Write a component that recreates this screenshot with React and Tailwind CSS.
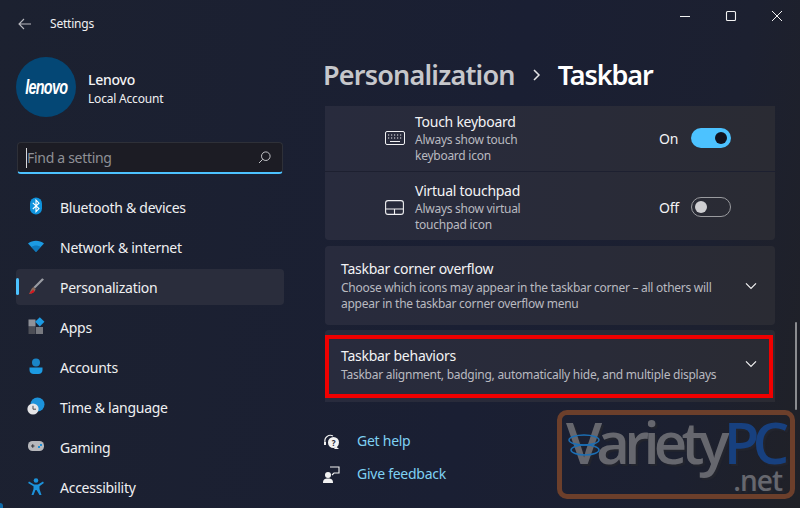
import React from "react";

const Bluetooth = () => (
  <svg width="20" height="20" viewBox="0 0 20 20">
    <rect x="4" y="0.5" width="12" height="17" rx="6" fill="#0f93dc" />
    <path d="M6.800 5.800 13 11.600 10 14.600V3.200l3 3L6.800 12" fill="none" stroke="#fff" strokeWidth="1.100" />
  </svg>
);
const Wifi = () => (
  <svg width="20" height="20" viewBox="0 0 20 20">
    <path d="M2 6.500C6.500 2.800 13.500 2.800 18 6.500L10 15Z" fill="#1c9ae2" />
    <path d="M5.500 10C8 8 12 8 14.500 10L10 15Z" fill="#0d78bd" />
  </svg>
);
const Brush = () => (
  <svg width="20" height="20" viewBox="0 0 20 20">
    <path d="M18 2.500 9 11.500 7.500 10 16.200 1.200Z" fill="#9a9ca3" />
    <path d="M7.500 10 9.600 12.200C9 15 6.500 16.500 2.800 16.800 4.800 15 4.500 11.600 7.500 10Z" fill="#8a6a5c" />
    <path d="M3 16.800 7 12.800 8.600 14.200C7.200 16 5.500 16.600 3 16.800Z" fill="#d8141c" />
  </svg>
);
const Apps = () => (
  <svg width="20" height="20" viewBox="0 0 20 20">
    <rect x="2.500" y="2.500" width="7" height="7" fill="#8f9198" />
    <rect x="2.500" y="10" width="7" height="7" fill="#4c4e56" />
    <rect x="10" y="10" width="7" height="7" fill="#77797f" />
    <rect x="10.500" y="1.500" width="6.600" height="6.600" transform="rotate(45 13.800 4.800)" fill="#1c9ae2" />
  </svg>
);
const Accounts = () => (
  <svg width="20" height="20" viewBox="0 0 20 20">
    <circle cx="10" cy="5.500" r="4" fill="#1a85c8" />
    <path d="M3.500 10.500h13v2.500c0 2.500-2 4-4 4h-5c-2 0-4-1.500-4-4Z" fill="#1c9ae2" />
  </svg>
);
const Clock = () => (
  <svg width="20" height="20" viewBox="0 0 20 20">
    <circle cx="11.500" cy="7.500" r="7" fill="#1c92da" />
    <circle cx="7" cy="12" r="5.600" fill="#e4e4e6" />
    <path d="M7 8.800V12.200H10" fill="none" stroke="#4a4a4e" strokeWidth="1" />
  </svg>
);
const Gaming = () => (
  <svg width="20" height="20" viewBox="0 0 20 20">
    <rect x="2" y="4" width="16" height="10" rx="4.500" fill="#b6b7bb" />
    <path d="M5 9h3.500M6.750 7.250v3.500" stroke="#33353c" strokeWidth="1.100" />
    <rect x="12" y="9" width="2" height="2" fill="#1c8fd8" />
    <rect x="14" y="7" width="2" height="2" fill="#1c8fd8" />
  </svg>
);
const Accessibility = () => (
  <svg width="20" height="20" viewBox="0 0 20 20">
    <circle cx="10" cy="3.500" r="2.300" fill="#1c92da" />
    <path d="M3 4.500 8 7.500h4l5-3 .9 1.400-4.400 3.300V12l2 6h-2L10.500 13h-1L7.500 18h-2l2-6V9.200L2.100 5.900Z" fill="#1c92da" />
  </svg>
);

const Chevron = () => (
  <svg width="12" height="8" viewBox="0 0 12 8" fill="none" stroke="#f2f2f2" strokeWidth="1.200">
    <path d="M1 1.300 6 6.300 11 1.300" />
  </svg>
);

const navItems = [
  ["Bluetooth & devices", Bluetooth],
  ["Network & internet", Wifi],
  ["Personalization", Brush],
  ["Apps", Apps],
  ["Accounts", Accounts],
  ["Time & language", Clock],
  ["Gaming", Gaming],
  ["Accessibility", Accessibility],
];

function NavRow({ label, Icon, active }) {
  return (
    <div className="h-10 py-0.5">
      <div className={"relative flex h-9 items-center rounded pl-[10px] " + (active ? "bg-[#2a2d3c]" : "")}>
        {active && <span className="absolute left-0 top-[9px] h-[17px] w-[3px] rounded-full bg-[#4cc2ff]" />}
        <span className="flex w-[34px] shrink-0"><Icon /></span>
        <span className="text-[14px] tracking-[-0.26px] text-[#eff0f2]">{label}</span>
      </div>
    </div>
  );
}

function Toggle({ on }) {
  return on ? (
    <span className="flex h-5 w-10 items-center justify-end rounded-full bg-[#4cc2ff] pr-1">
      <span className="h-3 w-3 rounded-full bg-[#10131f]" />
    </span>
  ) : (
    <span className="flex h-5 w-10 items-center rounded-full border border-[#9a9b9f] pl-[3px]">
      <span className="h-3 w-3 rounded-full bg-[#cfcfd2]" />
    </span>
  );
}

function ToggleRow({ title, l1, l2, on, icon, h }) {
  return (
    <div className={"flex items-center pl-[60px] pr-[44px] " + h}>
      <span className="flex w-[30px] shrink-0">{icon}</span>
      <div className="flex-1">
        <div className="text-[14px] leading-[20px] tracking-[-0.26px] text-[#f3f3f5]">{title}</div>
        <div className="text-[12px] leading-[16px] tracking-[-0.26px] text-[#b9bac0]">{l1}</div>
        <div className="text-[12px] leading-[16px] tracking-[-0.26px] text-[#b9bac0]">{l2}</div>
      </div>
      <span className="w-[32px] text-[14px] tracking-[-0.26px] text-[#f3f3f5]">{on ? "On" : "Off"}</span>
      <Toggle on={on} />
    </div>
  );
}

export default function App() {
  return (
    <div
      className="relative flex h-[508px] w-[800px] overflow-hidden bg-[linear-gradient(100deg,#1c2130_0%,#1a1f33_60%,#1c2030_85%,#202127_100%)] text-white"
      style={{ fontFamily: '"Noto Sans", "Open Sans", sans-serif' }}
    >
      <aside className="w-[300px] shrink-0 pl-4 pr-4">
        <div className="flex h-12 items-center">
          <svg width="13" height="12" viewBox="0 0 13 12" fill="none" stroke="#b9bac0" strokeWidth="1.100" className="ml-[2px]">
            <path d="M13 6H1M6 1 1 6l5 5" />
          </svg>
          <span className="ml-[19px] text-[12px] tracking-[-0.2px] text-[#f0f0f2]">Settings</span>
        </div>
        <div className="mt-[9px] flex items-center">
          <div className="flex h-[60px] w-[60px] items-center justify-center rounded-full bg-[#044775]">
            <span className="scale-x-[0.72] text-[20px] font-bold italic tracking-[-1px] text-white" style={{ fontFamily: '"Liberation Sans", sans-serif' }}>lenovo</span>
          </div>
          <div className="ml-3 mt-[3px]">
            <div className="text-[14px] font-medium leading-[20px] tracking-[-0.26px] text-[#f3f3f5]">Lenovo</div>
            <div className="mt-[1px] text-[12px] leading-[16px] tracking-[-0.2px] text-[#f0f0f2]">Local Account</div>
          </div>
        </div>
        <div className="relative ml-px mt-[25px] flex h-[32px] w-[266px] items-center rounded border border-[#2e3038] border-b-2 border-b-[#4cc2ff] bg-[#1c1c24] pl-[8px] pr-[11px]">
          <span className="h-[20px] w-px bg-[#d8d8da]" />
          <span className="flex-1 text-[14px] tracking-[-0.3px] text-[#8f9096]">Find a setting</span>
          <svg width="13" height="13" viewBox="0 0 13 13" fill="none" stroke="#c4c5c9" strokeWidth="1">
            <circle cx="7.800" cy="5.200" r="4.300" />
            <path d="M4.700 8.300 1 12" />
          </svg>
        </div>
        <nav className="mt-[13px]">
          {navItems.map(([label, Icon]) => (
            <NavRow key={label} label={label} Icon={Icon} active={label === "Personalization"} />
          ))}
        </nav>
      </aside>

      <main className="flex min-w-0 flex-1 flex-col pl-[24px] pr-[25px]">
        <div className="-mr-[8px] flex h-8 items-center justify-end gap-[34px]">
          <svg width="12" height="12" viewBox="0 0 12 12" stroke="#f2f2f2" strokeWidth="1"><path d="M1 6.500h10" /></svg>
          <svg width="12" height="12" viewBox="0 0 12 12" fill="none" stroke="#f2f2f2" strokeWidth="1.100"><rect x="1.500" y="1.500" width="9" height="9" rx="1" /></svg>
          <svg width="12" height="12" viewBox="0 0 12 12" stroke="#f2f2f2" strokeWidth="1"><path d="M1 1l10 10M11 1 1 11" /></svg>
        </div>
        <div className="-ml-px mt-[22px] flex h-[42px] items-center text-[27px] font-semibold tracking-[-0.8px]">
          <span className="text-[#c6c7cb]">Personalization</span>
          <svg width="8" height="12" viewBox="0 0 8 12" fill="none" stroke="#e4e4e6" strokeWidth="1.500" className="ml-[18px] mr-[17px]"><path d="M1 1l5 5-5 5" /></svg>
          <span className="tracking-[-1.100px] text-white">Taskbar</span>
        </div>

        <div className="ml-px flex flex-col">
          <section className="mt-[10px] w-[450px] rounded-b bg-[linear-gradient(90deg,#282b3d_0%,#292b38_60%,#2a2b33_100%)]">
            <ToggleRow
              h="h-[66px] border-b border-[#1d2030] pb-[1px]"
              title="Touch keyboard"
              l1="Always show touch"
              l2="keyboard icon"
              on
              icon={
                <svg width="20" height="14" viewBox="0 0 20 14" fill="none" stroke="#f0f0f2" strokeWidth="1">
                  <rect x="0.500" y="0.500" width="19" height="13" rx="1.500" />
                  <path d="M3 4h1.200M6 4h1.200M9 4h1.200M12 4h1.200M15 4h1.200M3 7h1.200M6 7h1.200M9 7h1.200M12 7h1.200M15 7h1.200M5 10.500h10" strokeWidth="1.200" />
                </svg>
              }
            />
            <ToggleRow
              h="h-[68px] pt-[2px]"
              title="Virtual touchpad"
              l1="Always show virtual"
              l2="touchpad icon"
              icon={
                <svg width="19" height="15" viewBox="0 0 19 15" fill="none" stroke="#f0f0f2" strokeWidth="1.100">
                  <rect x="0.600" y="0.600" width="17.800" height="13.800" rx="2.500" />
                  <path d="M0.600 9h17.800M9.500 9v5.400" />
                </svg>
              }
            />
          </section>

          <section className="mt-[6px] flex h-[79px] w-[450px] items-center rounded bg-[linear-gradient(90deg,#282b3d_0%,#292b38_60%,#2a2b33_100%)] pl-4 pr-[18px]">
            <div className="flex-1">
              <div className="text-[14px] leading-[20px] tracking-[-0.26px] text-[#f3f3f5]">Taskbar corner overflow</div>
              <div className="mt-[1px] text-[12px] leading-[16px] tracking-[-0.26px] text-[#b9bac0]">Choose which icons may appear in the taskbar corner – all others will</div>
              <div className="text-[12px] leading-[16px] tracking-[-0.26px] text-[#b9bac0]">appear in the taskbar corner overflow menu</div>
            </div>
            <Chevron />
          </section>

          <section className="relative mt-[5px] flex h-[72px] w-[450px] items-center rounded-t bg-[linear-gradient(90deg,#282b3d_0%,#292b38_60%,#2a2b33_100%)] pl-4 pr-[18px]">
            <div className="-mt-[4px] flex-1">
              <div className="text-[14px] leading-[20px] tracking-[-0.26px] text-[#f3f3f5]">Taskbar behaviors</div>
              <div className="mt-[1px] text-[12px] leading-[16px] tracking-[-0.26px] text-[#b9bac0]">Taskbar alignment, badging, automatically hide, and multiple displays</div>
            </div>
            <span className="-mt-[4px]"><Chevron /></span>
            <span className="absolute left-0 top-[5px] h-[63px] w-[448px] border-4 border-[#f00000]" />
          </section>

          <div className="mt-[28px] flex h-[22px] items-center">
            <svg width="17" height="17" viewBox="0 0 17 17" className="-ml-[2px] shrink-0">
              <path d="M2 9a5.500 5.500 0 0 1 8-6" fill="none" stroke="#f2f2f2" strokeWidth="1.200" />
              <path d="M2 9v3" stroke="#f2f2f2" strokeWidth="2" />
              <circle cx="10.500" cy="9.500" r="5.500" fill="#f2f2f2" />
              <path d="M13 13.500 16 16h-5Z" fill="#f2f2f2" />
              <text x="8.800" y="12.500" fontSize="8" fontWeight="700" fill="#1a1f33">?</text>
            </svg>
            <span className="ml-[17px] -mt-[1px] text-[14px] tracking-[-0.26px] text-[#7fd1f3]">Get help</span>
          </div>
          <div className="mt-[11px] flex h-[22px] items-center">
            <svg width="17" height="17" viewBox="0 0 17 17" className="-ml-[2px] shrink-0">
              <circle cx="5" cy="9" r="3" fill="#f2f2f2" />
              <path d="M0 17c0-3.500 1.500-4.500 5-4.500s5 1 5 4.500Z" fill="#f2f2f2" />
              <path d="M7 1h9v6h-5l-2 2" fill="none" stroke="#f2f2f2" strokeWidth="1.100" />
            </svg>
            <span className="ml-[17px] -mt-[1px] text-[14px] tracking-[-0.26px] text-[#7fd1f3]">Give feedback</span>
          </div>
        </div>
      </main>

      <span className="absolute left-[795px] top-[322px] h-[88px] w-[2px] rounded-full bg-[#8b8c90]" />
      <span className="absolute bottom-0 left-0 h-[5px] w-[3px] rounded-tr-full bg-[#0f6aa8]" />

      <div className="absolute left-[557px] top-[410px] h-[89px] w-[238px] rounded-[10px] border-[5px] border-[#6c3f2b]">
        <div
          className="absolute left-[4px] top-[5px] flex h-[44px] items-center whitespace-nowrap text-[58px] font-semibold leading-[44px] text-[#66676e] [text-shadow:2px_2px_1px_#23252e]"
          style={{ fontFamily: '"Open Sans", sans-serif' }}
        >
          <span className="block h-[44px] tracking-[-5.800px]">Variety</span>
          <span className="block h-[44px] tracking-[-7px] text-[#17407f]">PC</span>
        </div>
        <div
          className="absolute right-[8px] top-[54px] text-[28px] font-semibold leading-[22px] tracking-[-1px] text-[#66676e] [text-shadow:2px_2px_1px_#23252e]"
          style={{ fontFamily: '"Open Sans", sans-serif' }}
        >
          .net
        </div>
        <svg width="36" height="24" viewBox="0 0 36 24" fill="none" stroke="#1c6fb5" strokeWidth="1.500" className="absolute left-[5px] top-[18px]">
          <ellipse cx="17" cy="7" rx="15" ry="5" />
          <ellipse cx="18" cy="17" rx="14" ry="5" />
        </svg>
      </div>
    </div>
  );
}
